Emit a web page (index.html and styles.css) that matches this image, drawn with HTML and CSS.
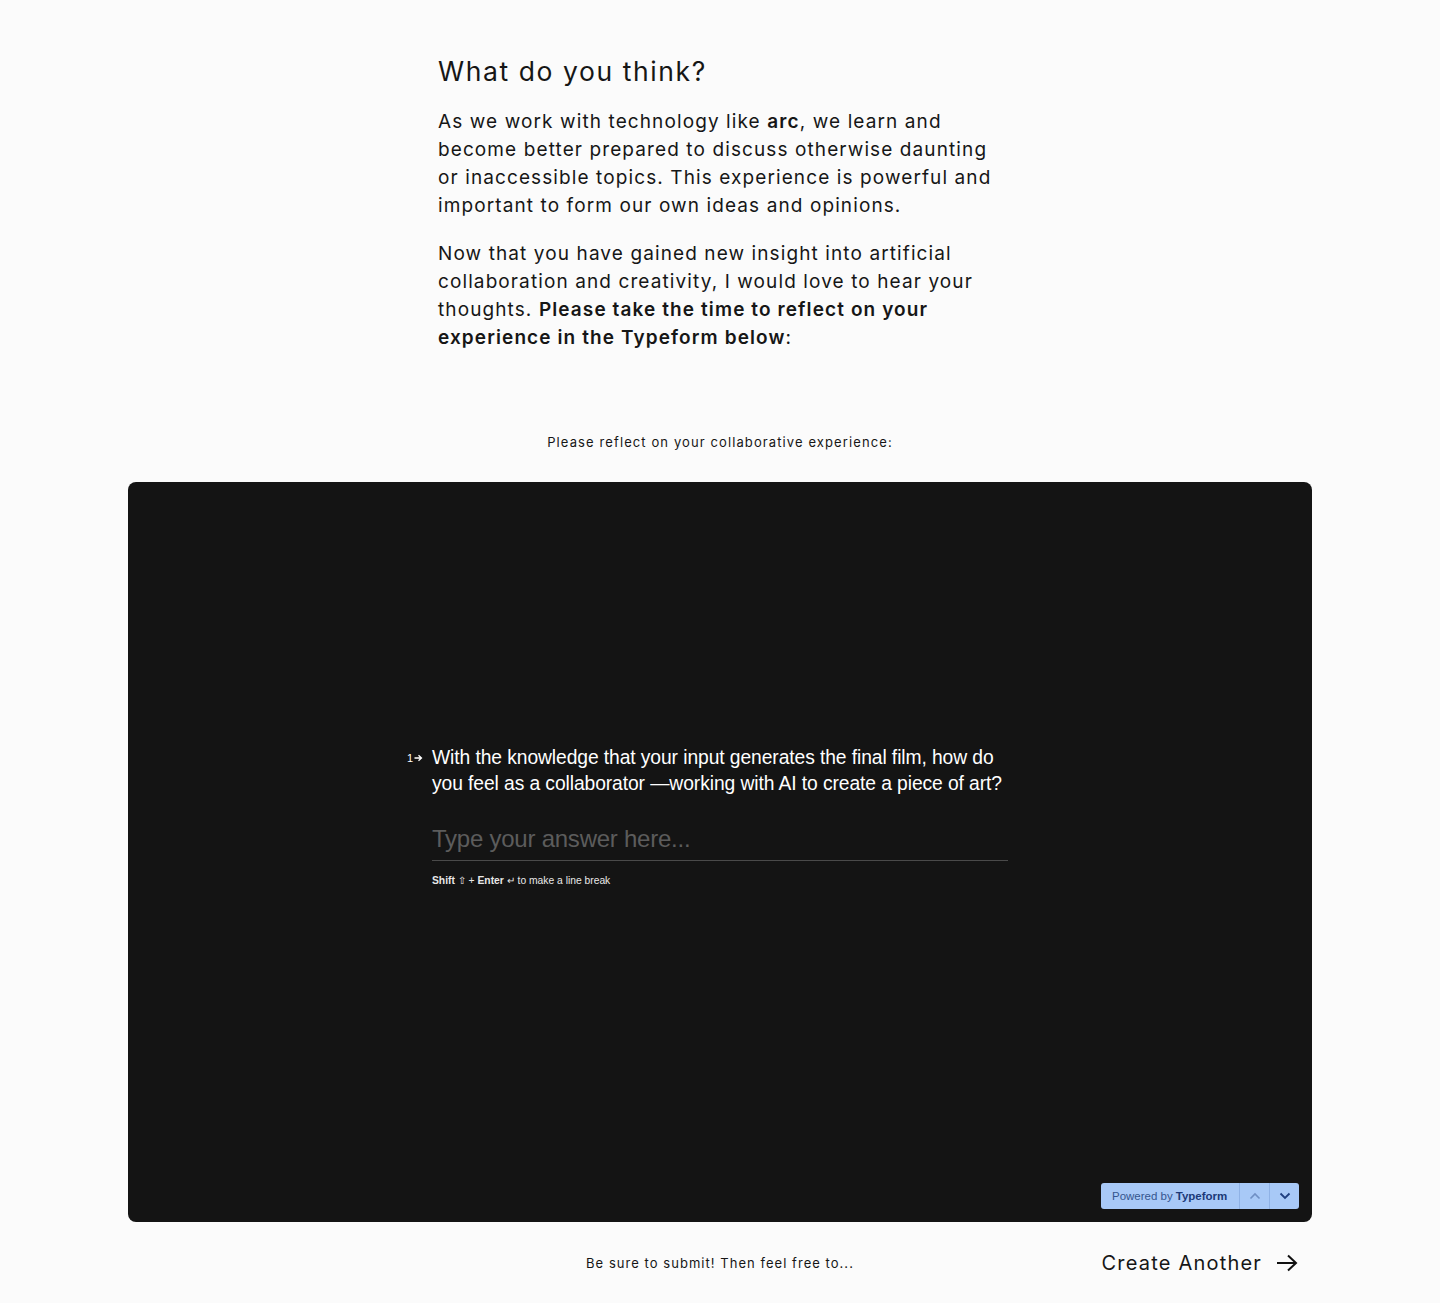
FILE: index.html
```html
<!DOCTYPE html>
<html lang="en">
<head>
<meta charset="utf-8">
<title>What do you think?</title>
<link rel="stylesheet" href="styles.css">
</head>
<body>
<main class="page">
  <section class="article">
    <h2 class="title">What do you think?</h2>
    <p class="para">As we work with technology like <b>arc</b>, we learn and become better prepared to discuss otherwise daunting or inaccessible topics. This experience is powerful and important to form our own ideas and opinions.</p>
    <p class="para">Now that you have gained new insight into artificial collaboration and creativity, I would love to hear your thoughts. <b>Please take the time to reflect on your experience in the Typeform below</b>:</p>
  </section>

  <p class="embed-label">Please reflect on your collaborative experience:</p>

  <section class="form">
    <div class="question">
      <div class="q-row">
        <span class="q-num">1<svg class="q-arrow" width="9" height="8" viewBox="0 0 9 8"><path d="M0.5 4H7M4.5 1.2L7.5 4L4.5 6.8" fill="none" stroke="#fff" stroke-width="1.3"/></svg></span>
        <p class="q-text">With the knowledge that your input generates the final film, how do you feel as a collaborator —working with AI to create a piece of art?</p>
      </div>
      <div class="answer">Type your answer here...</div>
      <p class="hint"><b>Shift</b> ⇧ + <b>Enter</b> ↵ to make a line break</p>
    </div>
    <div class="badge">
      <span class="badge-text">Powered by <b>Typeform</b></span>
      <span class="badge-btn"><svg width="12" height="8" viewBox="0 0 12 8"><path d="M1.5 6.5L6 2L10.5 6.5" fill="none" stroke="#6f8fc4" stroke-width="1.6"/></svg></span>
      <span class="badge-btn"><svg width="12" height="8" viewBox="0 0 12 8"><path d="M1.5 1.5L6 6L10.5 1.5" fill="none" stroke="#1f3f80" stroke-width="1.8"/></svg></span>
    </div>
  </section>

  <footer class="footer">
    <span></span>
    <span class="footer-note">Be sure to submit! Then feel free to...</span>
    <a class="create" href="#">Create Another
      <svg width="22" height="18" viewBox="0 0 22 18"><path d="M1 9H20M12 1.5L20 9L12 16.5" fill="none" stroke="#111" stroke-width="2"/></svg>
    </a>
  </footer>
</main>
</body>
</html>
```
FILE: styles.css
```css
* { box-sizing: border-box; }
html, body { margin: 0; padding: 0; }
body {
  background: #fbfbfb;
  color: #161616;
  font-family: Inter, "Noto Sans", sans-serif;
}
.page {
  display: flex;
  flex-direction: column;
  align-items: center;
  padding-top: 54px;
}
.article {
  width: 564px;
}
.title {
  margin: 0 0 20px;
  font-size: 26.5px;
  font-weight: 400;
  letter-spacing: 0.06em;
  line-height: 34px;
}
.para {
  margin: 0 0 20px;
  font-size: 19px;
  line-height: 28px;
  letter-spacing: 0.058em;
  font-weight: 400;
}
.para b { font-weight: 600; }
.embed-label {
  margin: 60px 0 30px;
  font-size: 13px;
  letter-spacing: 0.085em;
  line-height: 20px;
}
.form {
  position: relative;
  width: 1184px;
  height: 740px;
  background: #141414;
  border-radius: 8px;
  display: flex;
  justify-content: center;
  padding-top: 263px;
}
.question {
  width: 576px;
  font-family: "Liberation Sans", Arial, sans-serif;
  color: #fff;
}
.q-row {
  display: flex;
  align-items: flex-start;
}
.q-num {
  flex-shrink: 0;
  display: flex;
  align-items: center;
  gap: 1px;
  width: 25px;
  margin-left: -25px;
  font-size: 11px;
  line-height: 26px;
  color: #fff;
}
.q-text {
  margin: 0;
  flex: 1;
  font-size: 19.3px;
  line-height: 26px;
  letter-spacing: -0.005em;
}
.answer {
  margin-top: 26px;
  font-size: 24px;
  line-height: 32px;
  color: #5c5c5c;
  padding-bottom: 5px;
  border-bottom: 1px solid #4a4a4a;
  letter-spacing: -0.01em;
}
.hint {
  margin: 13px 0 0;
  font-size: 10.3px;
  line-height: 14px;
  color: #e8e8e8;
}
.hint b { font-weight: 700; }
.badge {
  position: absolute;
  right: 13px;
  bottom: 13px;
  height: 26px;
  display: flex;
  background: #a8c9f7;
  border-radius: 3px;
  font-family: "Liberation Sans", Arial, sans-serif;
  font-size: 11.5px;
  color: #35568f;
}
.badge-text {
  display: flex;
  align-items: center;
  padding: 0 11px;
  width: 138px;
}
.badge-text b { margin-left: 3px; color: #1c3a78; }
.badge-btn {
  width: 30px;
  display: flex;
  align-items: center;
  justify-content: center;
  border-left: 1px solid #8fb2e6;
}
.footer {
  width: 1184px;
  display: grid;
  grid-template-columns: 1fr auto 1fr;
  align-items: center;
  margin-top: 26px;
  height: 30px;
}
.footer-note {
  font-size: 13px;
  letter-spacing: 0.08em;
}
.create {
  justify-self: end;
  margin-right: 14px;
  display: flex;
  align-items: center;
  gap: 14px;
  color: #161616;
  text-decoration: none;
  font-size: 20px;
  letter-spacing: 0.06em;
}
```
